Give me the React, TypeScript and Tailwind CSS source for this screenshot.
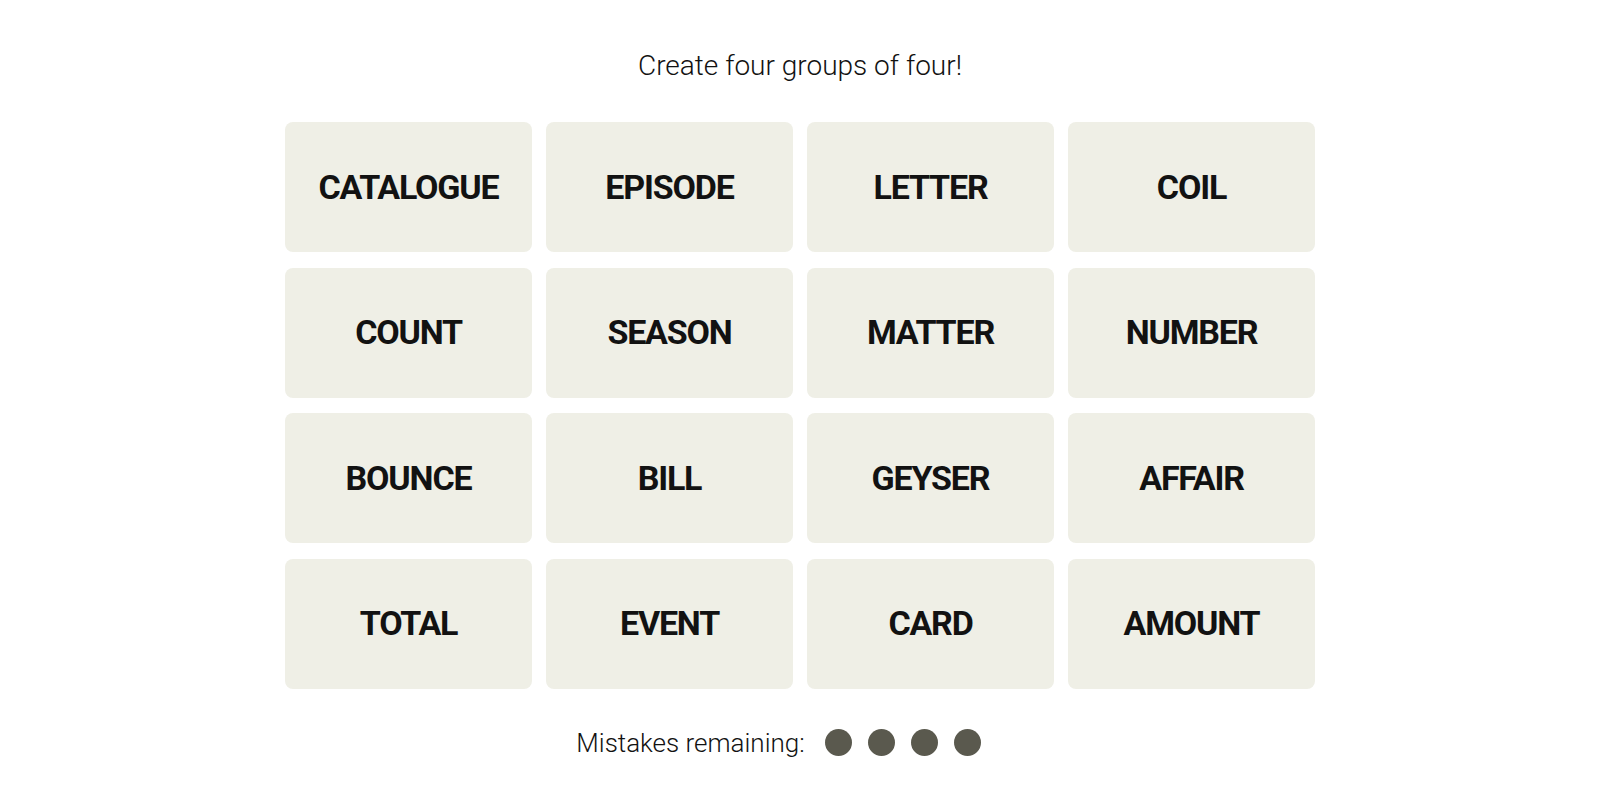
const words = [
  'CATALOGUE', 'EPISODE', 'LETTER', 'COIL',
  'COUNT', 'SEASON', 'MATTER', 'NUMBER',
  'BOUNCE', 'BILL', 'GEYSER', 'AFFAIR',
  'TOTAL', 'EVENT', 'CARD', 'AMOUNT',
];

export default function App() {
  return (
    <div className="min-h-screen w-full bg-white flex flex-col items-center text-[#121212] font-[Roboto,sans-serif]" style={{ fontFamily: 'Roboto, "Liberation Sans", sans-serif' }}>
      <p className="mt-[46px] text-[28px] leading-[40px] font-light">
        Create four groups of four!
      </p>
      <div className="mt-[36px] grid grid-cols-[repeat(4,247px)] auto-rows-[130px] gap-x-[14px] gap-y-[15.5px]">
        {words.map(w => (
          <button key={w} className="bg-[#efefe6] rounded-[8px] flex items-center justify-center text-[34px] font-bold tracking-[-0.035em]">
            {w}
          </button>
        ))}
      </div>
      <div className="mt-[39px] mr-[43px] flex items-center gap-[16px]">
        <span className="text-[26px] leading-[30px] mr-[4px] font-light">Mistakes remaining:</span>
        {[0, 1, 2, 3].map(i => (
          <span key={i} className="w-[27px] h-[27px] rounded-full bg-[#5a594e]" />
        ))}
      </div>
    </div>
  );
}
